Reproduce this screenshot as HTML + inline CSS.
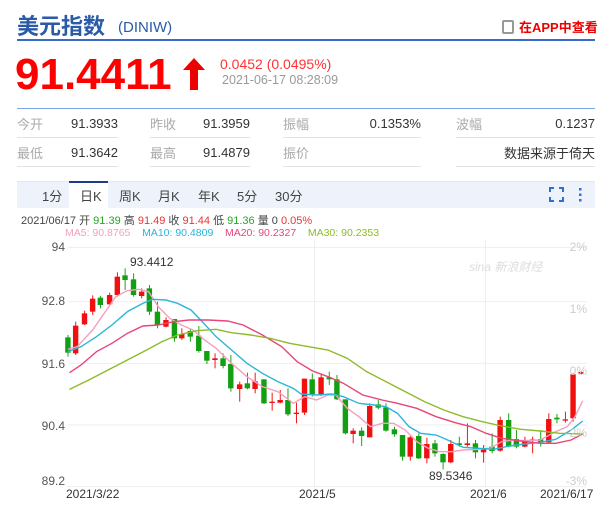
<!DOCTYPE html>
<html><head><meta charset="utf-8"><style>
body{margin:0;width:602px;height:510px;background:#fff;position:relative;overflow:hidden;font-family:"Liberation Sans","Noto Sans CJK SC",sans-serif}
.a{position:absolute;white-space:nowrap}
.lab{color:#aaa;font-size:13px}
.val{color:#333;font-size:13px;text-align:right}
.ul{position:absolute;height:1px;background:#e3e3e3}
.tab{position:absolute;top:186px;font-size:13px;color:#444}
.ax{position:absolute;font-size:12px;color:#555;text-align:right;width:40px}
.rx{position:absolute;font-size:12px;color:#ccc;text-align:right;width:30px;left:557px}
.dt{position:absolute;top:487px;font-size:12px;color:#333}
</style></head><body>
<div class="a" style="left:17px;top:9px;font-size:22px;font-weight:bold;color:#2b5aa6">美元指数</div>
<div class="a" style="left:118px;top:19px;font-size:15px;color:#2b5aa6">(DINIW)</div>
<div class="a" style="left:502px;top:20px;width:8px;height:10px;border:2px solid #999;border-radius:2px"></div>
<div class="a" style="left:519px;top:17px;font-size:13px;font-weight:bold;color:#e00">在APP中查看</div>
<div class="a" style="left:17px;top:39px;width:578px;height:2px;background:#3a6bc8"></div>
<div class="a" style="left:15px;top:50px;font-size:44px;font-weight:bold;color:#f00">91.4411</div>
<svg class="a" style="left:183px;top:58px" width="22" height="32" viewBox="0 0 22 32"><polygon points="11,0 22,12 15,12 15,32 7,32 7,12 0,12" fill="#e00"/></svg>
<div class="a" style="left:220px;top:56px;font-size:14px;color:#f33">0.0452 (0.0495%)</div>
<div class="a" style="left:222px;top:73px;font-size:12.5px;color:#999">2021-06-17 08:28:09</div>
<div class="a" style="left:17px;top:108px;width:578px;height:1px;background:#7aa6e6"></div>
<div class="a lab" style="left:17px;top:114px">今开</div><div class="a val" style="left:48px;width:70px;top:116px">91.3933</div>
<div class="a lab" style="left:150px;top:114px">昨收</div><div class="a val" style="left:180px;width:70px;top:116px">91.3959</div>
<div class="a lab" style="left:283px;top:114px">振幅</div><div class="a val" style="left:340px;width:81px;top:116px">0.1353%</div>
<div class="a lab" style="left:456px;top:114px">波幅</div><div class="a val" style="left:520px;width:75px;top:116px">0.1237</div>
<div class="a lab" style="left:17px;top:143px">最低</div><div class="a val" style="left:48px;width:70px;top:145px">91.3642</div>
<div class="a lab" style="left:150px;top:143px">最高</div><div class="a val" style="left:180px;width:70px;top:145px">91.4879</div>
<div class="a lab" style="left:283px;top:143px">振价</div><div class="a val" style="left:450px;width:145px;top:143px;color:#333">数据来源于倚天</div>
<div class="ul" style="left:17px;width:101px;top:137px"></div><div class="ul" style="left:150px;width:100px;top:137px"></div><div class="ul" style="left:283px;width:138px;top:137px"></div><div class="ul" style="left:456px;width:139px;top:137px"></div>
<div class="ul" style="left:17px;width:101px;top:166px"></div><div class="ul" style="left:150px;width:100px;top:166px"></div><div class="ul" style="left:283px;width:138px;top:166px"></div><div class="ul" style="left:456px;width:139px;top:166px"></div>
<div class="a" style="left:17px;top:181px;width:578px;height:26px;background:#eef3fb;border-top:1px solid #e0e8f5"></div>
<div class="a" style="left:69px;top:181px;width:39px;height:26px;background:#fff;border-top:2px solid #1f3a8a"></div>
<div class="tab" style="left:42px">1分</div><div class="tab" style="left:80px">日K</div><div class="tab" style="left:119px">周K</div><div class="tab" style="left:158px">月K</div><div class="tab" style="left:198px">年K</div><div class="tab" style="left:237px">5分</div><div class="tab" style="left:275px">30分</div>
<svg class="a" style="left:549px;top:187px" width="40" height="15"><g stroke="#2d6fd6" stroke-width="2" fill="none"><path d="M1 5V1H5M10 1H14V5M14 10V14H10M5 14H1V10"/></g><g fill="#2d6fd6"><rect x="30" y="1" width="2.5" height="2.5"/><rect x="30" y="6.5" width="2.5" height="2.5"/><rect x="30" y="12" width="2.5" height="2.5"/></g></svg>
<div class="a" style="left:21px;top:212px;font-size:11px;color:#444">2021/06/17 开 <span style="color:#2a2">91.39</span> 高 <span style="color:#e33">91.49</span> 收 <span style="color:#e33">91.44</span> 低 <span style="color:#2a2">91.36</span> 量 0 <span style="color:#e33">0.05%</span></div>
<div class="a" style="left:65px;top:227px;font-size:10.5px"><span style="color:#f5a0bf">MA5: 90.8765</span>&nbsp;&nbsp;&nbsp;&nbsp;<span style="color:#2bb5d9">MA10: 90.4809</span>&nbsp;&nbsp;&nbsp;&nbsp;<span style="color:#e8457a">MA20: 90.2327</span>&nbsp;&nbsp;&nbsp;&nbsp;<span style="color:#8fba2a">MA30: 90.2353</span></div>
<svg id="ch" class="a" style="left:0;top:240px" width="602" height="270" viewBox="0 0 1560 810" preserveAspectRatio="none">
<g stroke="#eee" stroke-width="1">
<line x1="176" y1="22" x2="1520" y2="22" vector-effect="non-scaling-stroke"/><line x1="176" y1="185" x2="1520" y2="185" vector-effect="non-scaling-stroke"/><line x1="176" y1="370" x2="1520" y2="370" vector-effect="non-scaling-stroke"/><line x1="176" y1="555" x2="1520" y2="555" vector-effect="non-scaling-stroke"/><line x1="176" y1="740" x2="1520" y2="740" vector-effect="non-scaling-stroke"/>
<line x1="815" y1="0" x2="815" y2="740" vector-effect="non-scaling-stroke"/><line x1="1258" y1="0" x2="1258" y2="740" vector-effect="non-scaling-stroke"/>
</g><g id="cs"></g><g id="ls"></g></svg>
<div class="ax" style="left:25px;top:240px">94</div><div class="ax" style="left:25px;top:294px">92.8</div><div class="ax" style="left:25px;top:357px">91.6</div><div class="ax" style="left:25px;top:419px">90.4</div><div class="ax" style="left:25px;top:474px">89.2</div>
<div class="rx" style="top:240px">2%</div><div class="rx" style="top:302px">1%</div><div class="rx" style="top:364px">0%</div><div class="rx" style="top:426px">-2%</div><div class="rx" style="top:474px">-3%</div>
<div class="a" style="left:130px;top:255px;font-size:12px;color:#333">93.4412</div>
<div class="a" style="left:429px;top:469px;font-size:12px;color:#333">89.5346</div>
<div class="a" style="left:469px;top:258px;font-size:12px;color:#ddd;font-style:italic">sina 新浪财经</div>
<div class="dt" style="left:66px">2021/3/22</div><div class="dt" style="left:299px">2021/5</div><div class="dt" style="left:470px">2021/6</div><div class="dt" style="left:540px">2021/6/17</div>
<script>
var C=[[176,'g',292,338,285,350],[196,'r',257,340,245,345],[219,'r',220,253,212,255],[240,'r',176,215,166,225],[260,'g',173,195,168,205],[284,'r',165,193,158,195],[304,'r',110,165,97,170],[324,'g',106,120,85,150],[346,'g',118,165,100,170],[367,'r',155,168,145,175],[387,'g',145,215,135,225],[408,'g',215,255,185,265],[430,'r',240,260,232,262],[452,'g',237,295,237,305],[471,'r',282,295,265,300],[493,'g',273,290,265,305],[515,'g',287,333,258,338],[536,'g',333,362,333,372],[557,'r',355,360,340,385],[578,'g',355,378,340,385],[598,'g',372,445,345,455],[621,'r',433,447,425,485],[641,'g',430,445,398,448],[661,'r',424,447,398,460],[684,'g',418,490,418,492],[705,'r',485,488,458,512],[726,'r',480,488,450,490],[746,'g',480,523,445,528],[768,'r',518,521,488,550],[789,'r',416,518,416,525],[809,'g',418,465,400,470],[832,'r',412,465,400,468],[853,'g',412,418,395,435],[873,'g',418,478,405,480],[895,'g',478,580,478,583],[915,'r',572,582,565,610],[937,'g',572,588,562,618],[958,'r',498,592,490,592],[980,'g',493,503,480,508],[1000,'g',502,572,490,575],[1022,'g',568,583,560,590],[1043,'g',585,650,585,662],[1063,'r',592,650,588,662],[1085,'g',588,655,580,657],[1106,'r',612,655,593,670],[1127,'g',610,640,600,650],[1148,'g',642,667,640,688],[1168,'r',612,667,600,670],[1190,'g',610,615,590,620],[1211,'r',610,615,550,620],[1232,'g',610,637,600,655],[1253,'r',628,637,615,668],[1275,'g',620,633,580,640],[1296,'r',540,632,530,635],[1318,'g',540,620,520,622],[1338,'g',597,620,570,625],[1360,'r',600,620,590,622],[1380,'r',598,602,590,640],[1401,'g',597,607,570,620],[1422,'r',537,607,520,610],[1443,'g',533,538,522,550],[1465,'r',538,542,515,548],[1485,'r',403,535,400,545],[1506,'r',396,401,393,403]];
var s='';C.forEach(function(c){var col=c[1]=='r'?'#f01010':'#12a012';s+='<rect x="'+(c[0]-1)+'" y="'+c[4]+'" width="2.5" height="'+(c[5]-c[4])+'" fill="'+col+'"/><rect x="'+(c[0]-7)+'" y="'+c[2]+'" width="14" height="'+Math.max(4,c[3]-c[2])+'" fill="'+col+'"/>';});
document.getElementById('cs').innerHTML=s;
var L=[['#f5a0bf','176,328 200,320 240,270 270,220 300,170 330,152 360,148 385,155 410,200 440,235 470,255 500,270 530,300 560,325 600,370 640,410 680,440 720,455 760,490 790,470 820,480 850,465 870,465 900,505 930,530 960,560 990,550 1020,550 1050,570 1080,605 1110,625 1140,635 1170,635 1200,630 1240,628 1270,625 1300,605 1330,600 1360,602 1400,600 1440,575 1470,560 1490,530 1510,482'],['#2bb5d9','176,335 210,320 250,290 290,255 330,215 370,190 395,178 430,180 460,190 495,210 520,240 560,290 600,330 640,370 680,400 720,425 760,445 780,462 820,465 860,462 890,470 930,490 970,495 1000,500 1030,520 1060,560 1090,580 1130,585 1160,600 1200,622 1240,625 1280,628 1320,618 1360,612 1400,607 1440,598 1480,570 1510,543'],['#e8457a','180,398 210,375 250,335 290,310 330,280 370,258 410,255 450,245 490,240 540,240 590,243 630,255 680,285 730,320 770,365 810,393 850,410 890,430 940,465 990,480 1030,490 1080,505 1130,530 1180,548 1220,560 1260,580 1300,595 1350,603 1400,610 1440,610 1480,600 1510,582'],['#8fba2a','180,448 230,420 280,390 330,360 380,330 420,305 460,285 510,272 560,268 600,278 650,285 700,295 750,310 800,320 850,330 900,355 950,395 1000,425 1050,455 1100,485 1150,510 1200,530 1250,545 1300,558 1350,568 1400,573 1450,580 1510,582']];
var t='';L.forEach(function(l){t+='<polyline points="'+l[1]+'" fill="none" stroke="'+l[0]+'" stroke-width="1.4" vector-effect="non-scaling-stroke"/>';});
document.getElementById('ls').innerHTML=t;
</script>
</body></html>
